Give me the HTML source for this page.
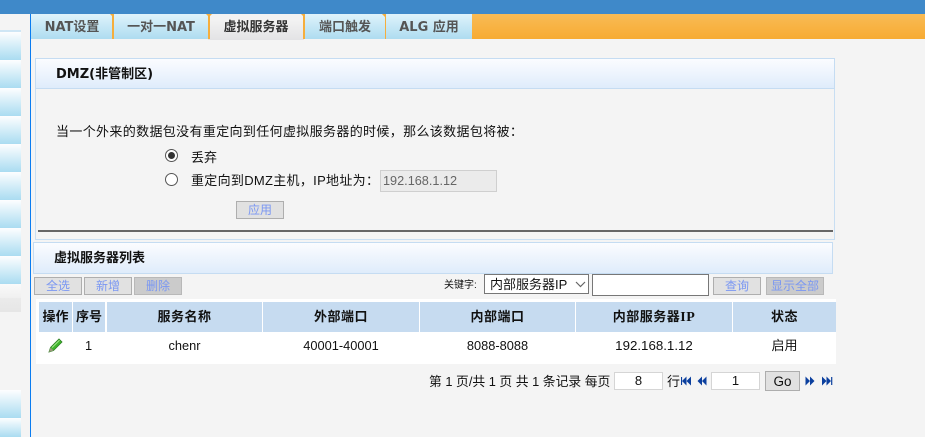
<!DOCTYPE html>
<html><head><meta charset="utf-8">
<style>
html,body{margin:0;padding:0;overflow:hidden;width:925px;height:437px}
body{background:#f4f4f4;position:relative;font-family:"Liberation Sans","Noto Sans CJK SC",sans-serif;font-size:12px;color:#111}
div,span.a{position:absolute;box-sizing:border-box;white-space:nowrap}
.s{left:0;width:21px;height:28px;background:linear-gradient(#fdfeff,#aadcf1)}
.tab{top:14px;height:25px;background:linear-gradient(#dff3fb,#aedcf0);color:#555;font-weight:bold;font-size:13px;line-height:27px;text-align:center;font-family:"DejaVu Sans","Noto Sans CJK SC",sans-serif}
.sep{top:14px;width:2px;height:25px;background:#f5ae3d}
.cap{top:14px;width:6px;height:3px;background:#f5ae3d;clip-path:polygon(0 0,100% 0,50% 100%)}
.ph{background:linear-gradient(#fbfcff,#dfecfb);border:1px solid #c5dcf2}
.h{font-weight:bold;font-size:13px;line-height:18px;font-family:"DejaVu Sans","Noto Sans CJK SC",sans-serif}
.b{height:18px;background:#e1e1e1;border:1px solid #aeaeae;color:#7a97f2;font-size:12px;line-height:16px;text-align:center}
.d{background:#cbcbcb;border-color:#b8b8b8}
.th{top:302px;height:30px;background:#c6dbf0;font-weight:bold;font-size:13px;line-height:30px;text-align:center;color:#111;letter-spacing:.5px}
.td{top:332px;height:28px;line-height:27px;text-align:center;font-size:12.8px}
.in{background:#fff;border:1px solid #d5d5d5;text-align:center;line-height:16px;font-size:13px}
.r{width:13px;height:13px;border:1px solid #555;border-radius:50%;background:#fff}
</style></head><body>
<div style="left:0;top:0;width:925px;height:14px;background:#3f89c9"></div>
<div style="left:0;top:30px;width:21px;height:2px;background:#cfe6f5"></div>
<div class="s" style="top:32px"></div><div class="s" style="top:60px"></div><div class="s" style="top:88px"></div><div class="s" style="top:116px"></div><div class="s" style="top:144px"></div><div class="s" style="top:172px"></div><div class="s" style="top:200px"></div><div class="s" style="top:228px"></div><div class="s" style="top:256px"></div>
<div style="left:0;top:284px;width:21px;height:14px;background:linear-gradient(#fafafa,#f0f0f0)"></div>
<div style="left:0;top:298px;width:21px;height:14px;background:linear-gradient(#ebebeb,#e6e6e6)"></div>
<div class="s" style="top:390px"></div><div class="s" style="top:418px;height:19px"></div>
<div style="left:30px;top:14px;width:1px;height:423px;background:#0a7cf0"></div>

<div style="left:31px;top:14px;width:894px;height:25px;background:linear-gradient(#f9bb55,#f7ab33)"></div>
<div style="left:208px;top:14px;width:96px;height:26px;background:linear-gradient(#f2f2f2 25%,#e3e3e5)"></div>
<div class="tab" style="left:31px;width:82px">NAT设置</div>
<div class="sep" style="left:112px"></div><div class="cap" style="left:110px"></div>
<div class="tab" style="left:114px;width:94px">一对一NAT</div>
<div class="sep" style="left:208px"></div><div class="cap" style="left:206px"></div>
<div class="tab" style="left:210px;width:92px;background:none;color:#333">虚拟服务器</div>
<div class="sep" style="left:303px"></div><div class="cap" style="left:301px"></div>
<div class="tab" style="left:305px;width:80px">端口触发</div>
<div class="sep" style="left:385px;width:1px"></div><div class="cap" style="left:382px"></div>
<div class="tab" style="left:386px;width:86px">ALG 应用</div>

<div style="left:35px;top:58px;width:800px;height:182px;border:1px solid #c8def2;background:#f4f4f4"></div>
<div class="ph" style="left:35px;top:58px;width:800px;height:31px"></div>
<div class="h" style="left:56px;top:66px">DMZ(非管制区)</div>
<div style="left:56px;top:123px;font-size:13px;line-height:18px;letter-spacing:.35px">当一个外来的数据包没有重定向到任何虚拟服务器的时候，那么该数据包将被：</div>
<div class="r" style="left:165px;top:149px"></div>
<div style="left:168px;top:152px;width:7px;height:7px;border-radius:50%;background:#333"></div>
<div style="left:191px;top:149px;font-size:13px;line-height:18px">丢弃</div>
<div class="r" style="left:165px;top:173px"></div>
<div style="left:191px;top:172px;font-size:13px;line-height:18px;letter-spacing:.3px">重定向到DMZ主机，IP地址为：</div>
<div style="left:380px;top:170px;width:117px;height:22px;background:#ebebeb;border:1px solid #cfcfcf;color:#666;font-size:12.7px;line-height:20px;padding-left:2px">192.168.1.12</div>
<div class="b" style="left:236px;top:201px;width:48px">应用</div>
<div style="left:38px;top:230px;width:795px;height:2px;background:#666"></div>

<div class="ph" style="left:33px;top:242px;width:800px;height:32px"></div>
<div class="h" style="left:54px;top:250px">虚拟服务器列表</div>

<div class="b" style="left:34px;top:277px;width:48px">全选</div>
<div class="b" style="left:84px;top:277px;width:48px">新增</div>
<div class="b d" style="left:134px;top:277px;width:48px">删除</div>
<div style="left:444px;top:279px;font-size:10px;line-height:14px">关键字:</div>
<div style="left:484px;top:274px;width:105px;height:20px;background:#fff;border:1px solid #777;font-size:13px;line-height:20px;padding-left:5px">内部服务器IP</div>
<svg style="position:absolute;left:575px;top:281px" width="11" height="7"><path d="M1 1L5.5 5.5L10 1" fill="none" stroke="#666" stroke-width="1.2"/></svg>
<div style="left:592px;top:274px;width:117px;height:22px;background:#fff;border:1px solid #777"></div>
<div class="b" style="left:713px;top:277px;width:48px">查询</div>
<div class="b d" style="left:766px;top:277px;width:58px">显示全部</div>

<div style="left:36px;top:299px;width:800px;height:65px;background:#fff"></div>
<div class="th" style="left:39px;width:33px;letter-spacing:0">操作</div>
<div class="th" style="left:73px;width:32px;letter-spacing:0">序号</div>
<div class="th" style="left:107px;width:155px">服务名称</div>
<div class="th" style="left:263px;width:156px">外部端口</div>
<div class="th" style="left:420px;width:155px">内部端口</div>
<div class="th" style="left:576px;width:156px">内部服务器<span style="font-family:'Liberation Serif',serif;font-size:14px">IP</span></div>
<div class="th" style="left:733px;width:103px">状态</div>

<svg style="position:absolute;left:48px;top:338px" width="15" height="15" viewBox="0 0 15 15"><path d="M1 14L2.5 9.5L11 1L14 4L5.5 12.5Z" fill="#3fb52c" stroke="#2d7f24" stroke-width=".8"/><path d="M4 9.5L11.5 2.2" stroke="#a6e88f" stroke-width="1"/><path d="M1 14L2.5 9.5L5.5 12.5Z" fill="#9a9a7a"/></svg>
<div class="td" style="left:73px;width:31px">1</div>
<div class="td" style="left:107px;width:155px">chenr</div>
<div class="td" style="left:263px;width:156px">40001-40001</div>
<div class="td" style="left:420px;width:155px">8088-8088</div>
<div class="td" style="left:576px;width:156px;font-size:13.3px">192.168.1.12</div>
<div class="td" style="left:733px;width:103px;font-size:13px">启用</div>

<div style="left:429px;top:373px;font-size:12.8px;line-height:18px">第 1 页/共 1 页 共 1 条记录 每页</div>
<div class="in" style="left:614px;top:372px;width:49px;height:18px">8</div>
<div style="left:667px;top:373px;font-size:13px;line-height:18px">行</div>
<svg style="position:absolute;left:681px;top:376px" width="10" height="10"><path d="M.5 1V9" stroke="#0b3f9e" stroke-width="1.2"/><path d="M5.5 .5L1 5L5.5 9.5ZM10 .5L5.5 5L10 9.5Z" fill="#0b3f9e"/></svg>
<svg style="position:absolute;left:697px;top:376px" width="10" height="10"><path d="M5 .5L.5 5L5 9.5ZM9.5 .5L5 5L9.5 9.5Z" fill="#0b3f9e"/></svg>
<div class="in" style="left:711px;top:372px;width:49px;height:18px">1</div>
<div style="left:765px;top:371px;width:35px;height:20px;background:#e1e1e1;border:1px solid #adadad;text-align:center;font-size:13.5px;line-height:19px">Go</div>
<svg style="position:absolute;left:805px;top:376px" width="10" height="10"><path d="M.5 .5L5 5L.5 9.5ZM5 .5L9.5 5L5 9.5Z" fill="#0b3f9e"/></svg>
<svg style="position:absolute;left:822px;top:376px" width="11" height="10"><path d="M0 .5L4.5 5L0 9.5ZM4.5 .5L9 5L4.5 9.5Z" fill="#0b3f9e"/><path d="M9.7 1V9" stroke="#0b3f9e" stroke-width="1.2"/></svg>
</body></html>
